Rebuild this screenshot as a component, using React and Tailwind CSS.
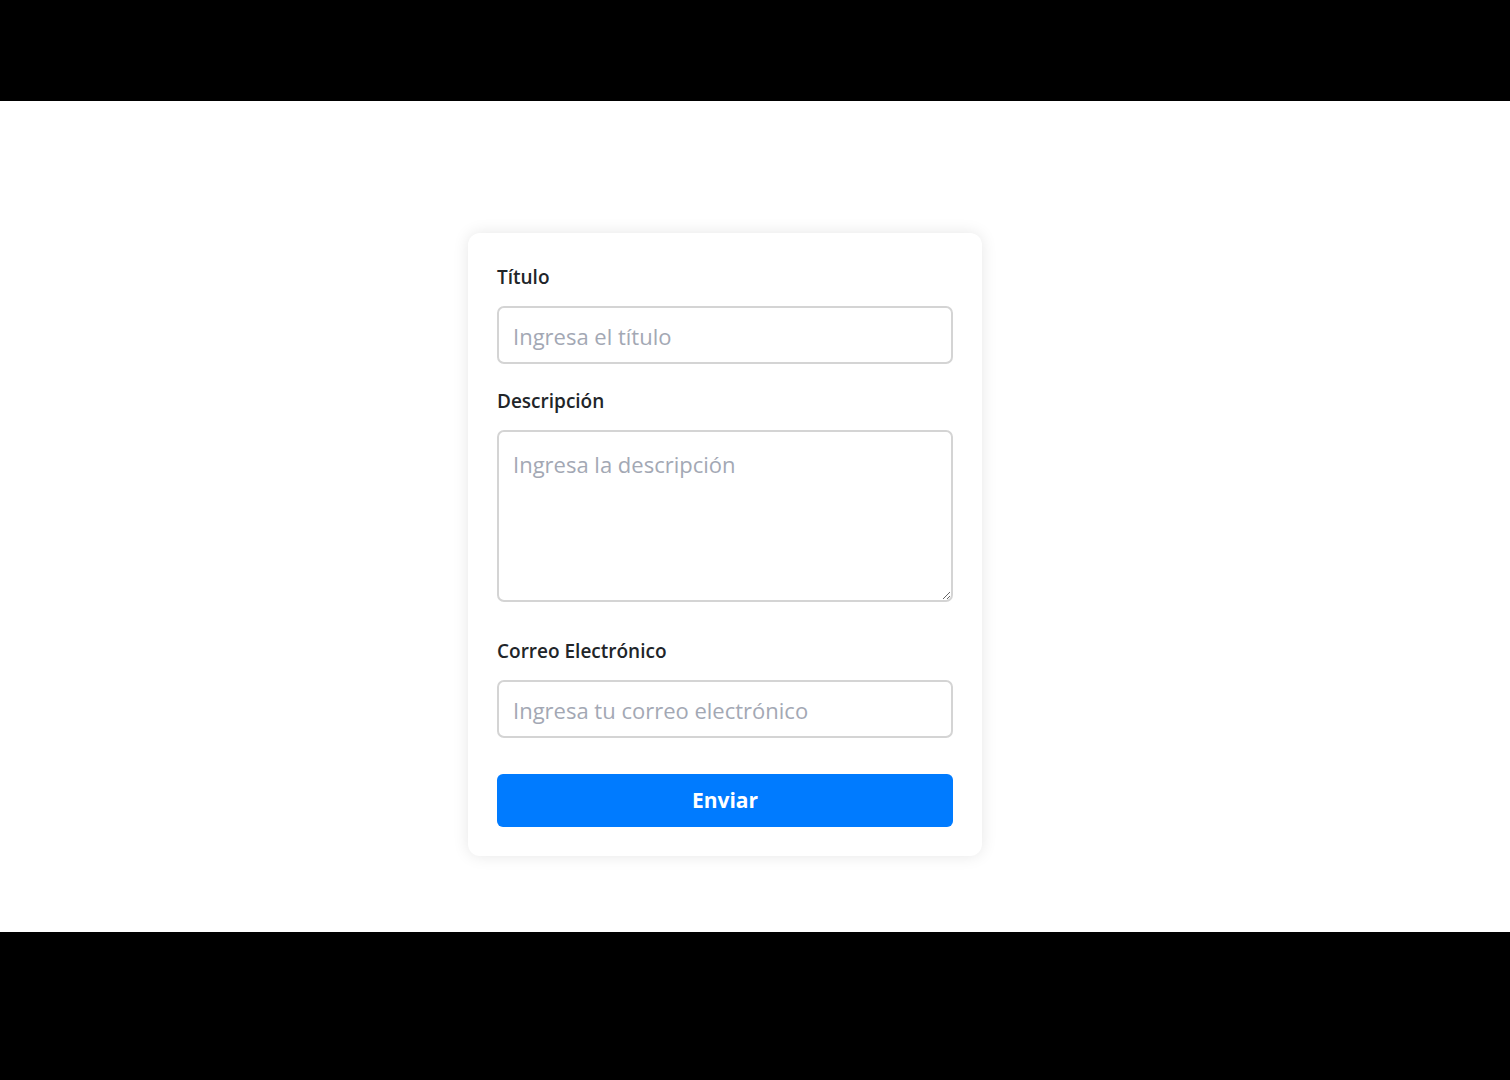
import React from 'react';

const App = () => {
    return (
        <div className="w-[1510px] h-[1080px] bg-black flex flex-col" style={{ fontFamily: '"Open Sans", "Noto Sans", sans-serif' }}>
            {/* Top letterbox */}
            <div className="h-[101px] shrink-0" />

            {/* Page */}
            <div className="h-[831px] bg-white pt-[132px] pl-[468px]">
                <form className="w-[514px] bg-white rounded-[12px] shadow-[0_0_16px_rgba(0,0,0,0.1)] p-[29px]">
                    <label className="block text-[19px] leading-[30px] font-semibold text-[#212529] mb-[14px]">Título</label>
                    <input
                        type="text"
                        placeholder="Ingresa el título"
                        className="block w-full h-[58px] px-[14px] pt-[2px] border-2 border-[#d4d4d4] rounded-[7px] text-[22px] text-[#212529] placeholder:text-[#a3a8b4] outline-none mb-[22px]"
                    />

                    <label className="block text-[19px] leading-[30px] font-semibold text-[#212529] mb-[14px]">Descripción</label>
                    <textarea
                        placeholder="Ingresa la descripción"
                        className="block w-full h-[172px] px-[14px] py-[17px] border-2 border-[#d4d4d4] rounded-[7px] text-[22px] leading-[30px] text-[#212529] placeholder:text-[#a3a8b4] outline-none mb-[34px]"
                    />

                    <label className="block text-[19px] leading-[30px] font-semibold text-[#212529] mb-[14px]">Correo Electrónico</label>
                    <input
                        type="email"
                        placeholder="Ingresa tu correo electrónico"
                        className="block w-full h-[58px] px-[14px] pt-[2px] border-2 border-[#d4d4d4] rounded-[7px] text-[22px] text-[#212529] placeholder:text-[#a3a8b4] outline-none mb-[36px]"
                    />

                    <button
                        type="button"
                        className="block w-full h-[53px] bg-[#007bff] text-white text-[21px] font-bold rounded-[6px]"
                    >
                        Enviar
                    </button>
                </form>
            </div>

            {/* Bottom letterbox */}
            <div className="flex-1" />
        </div>
    );
};

export default App;
